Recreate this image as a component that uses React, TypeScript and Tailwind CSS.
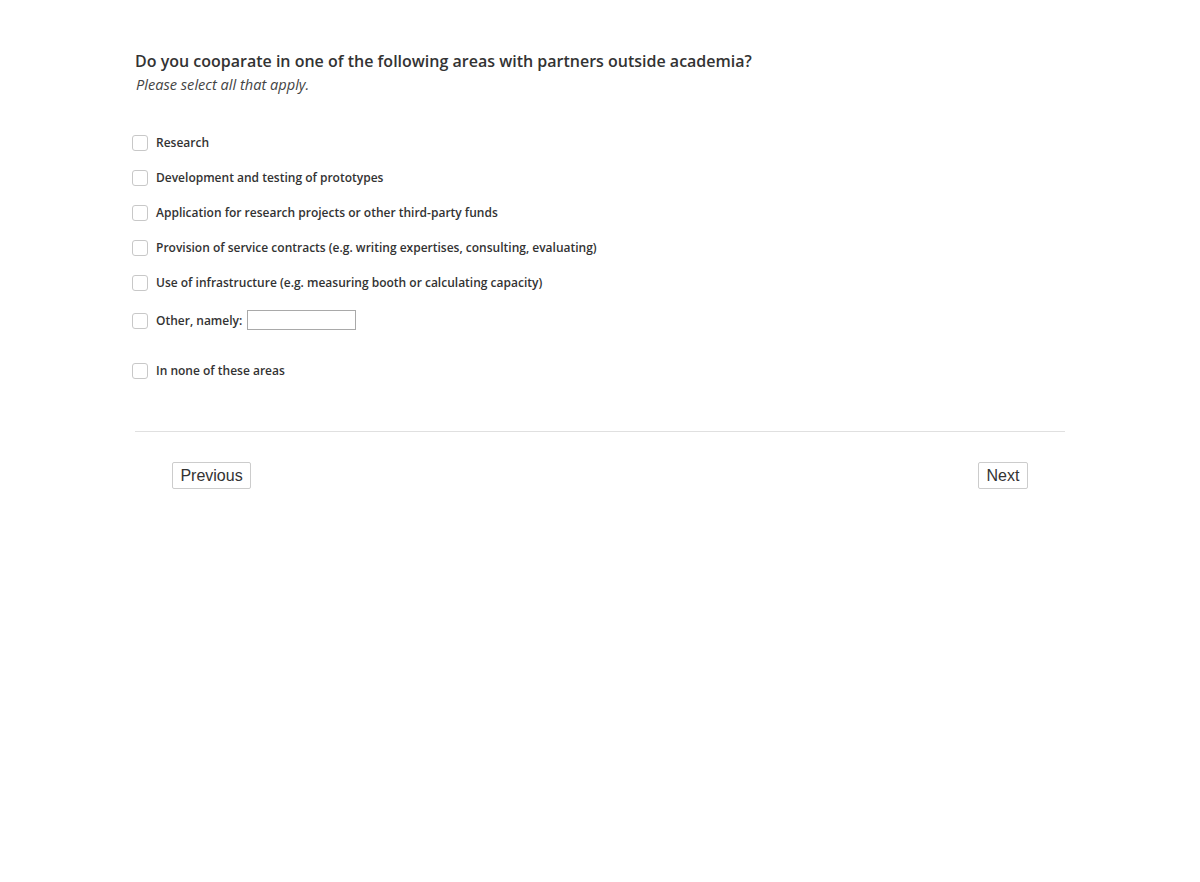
import React, { useState } from 'react';

const options = [
  'Research',
  'Development and testing of prototypes',
  'Application for research projects or other third-party funds',
  'Provision of service contracts (e.g. writing expertises, consulting, evaluating)',
  'Use of infrastructure (e.g. measuring booth or calculating capacity)',
];

const Box: React.FC<{ checked: boolean; onToggle: () => void }> = ({ checked, onToggle }) => (
  <button
    type="button"
    onClick={onToggle}
    className={`w-4 h-4 shrink-0 rounded-[3px] border border-[#c8c8c8] bg-white flex items-center justify-center ${checked ? 'bg-[#337ab7] border-[#337ab7]' : ''}`}
  >
    {checked && (
      <svg viewBox="0 0 12 12" className="w-3 h-3" fill="none" stroke="white" strokeWidth="2">
        <path d="M2 6l3 3 5-6" />
      </svg>
    )}
  </button>
);

const App: React.FC = () => {
  const [checked, setChecked] = useState<Record<string, boolean>>({});
  const toggle = (k: string) => setChecked((c) => ({ ...c, [k]: !c[k] }));

  return (
    <div className="min-h-[882px] bg-white font-['Open_Sans',sans-serif] text-[#333]">
      <div className="w-[930px] ml-[135px] pt-[51px]">
        <h1 className="text-[16px] font-semibold leading-[20px] text-[#333]">
          Do you cooparate in one of the following areas with partners outside academia?
        </h1>
        <p className="text-[14.6px] italic leading-[22px] text-[#444] pl-px mt-[2px]">Please select all that apply.</p>

        <div className="mt-[30px] -ml-[3px]">
          {options.map((o) => (
            <label key={o} className="flex items-center gap-2 h-[35px] cursor-pointer">
              <Box checked={!!checked[o]} onToggle={() => toggle(o)} />
              <span className="text-[12px] font-semibold text-[#333]">{o}</span>
            </label>
          ))}
          <div className="flex items-center gap-2 h-[35px] mt-[3px]">
            <Box checked={!!checked.other} onToggle={() => toggle('other')} />
            <span className="text-[12px] font-semibold text-[#333]">Other, namely:</span>
            <input type="text" className="-ml-[3px] -mt-[2px] w-[109px] h-[20px] border border-[#a9a9a9] outline-none px-1 text-[12px]" />
          </div>
          <div className="flex items-center gap-2 h-[35px] mt-[15px]">
            <Box checked={!!checked.none} onToggle={() => toggle('none')} />
            <span className="text-[12px] font-semibold text-[#333]">In none of these areas</span>
          </div>
        </div>

        <div className="mt-[43px] border-t border-[#e0e0e0]" />

        <div className="flex justify-between px-[37px] pt-[30px]">
          <button className="h-[27px] w-[79px] border border-[#ccc] rounded-[2px] bg-white font-['Liberation_Sans',sans-serif] text-[16px] text-[#333]">
            Previous
          </button>
          <button className="h-[27px] w-[50px] border border-[#ccc] rounded-[2px] bg-white font-['Liberation_Sans',sans-serif] text-[16px] text-[#333]">
            Next
          </button>
        </div>
      </div>
    </div>
  );
};

export default App;
